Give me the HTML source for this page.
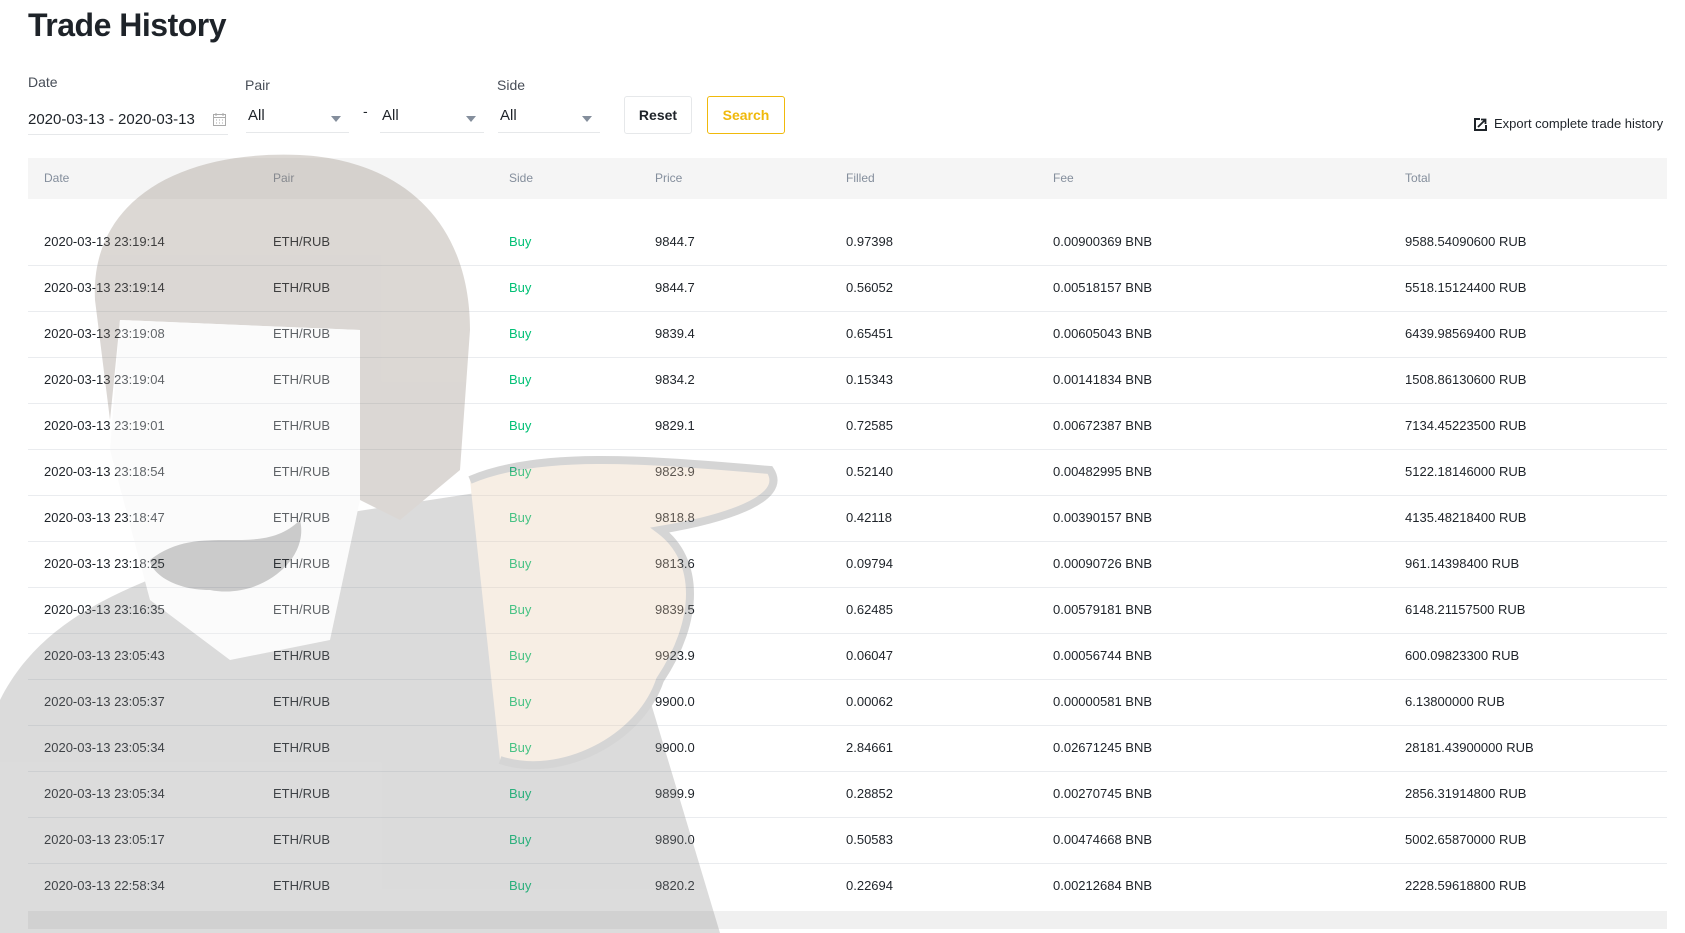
<!DOCTYPE html>
<html><head><meta charset="utf-8"><style>
*{margin:0;padding:0;box-sizing:border-box}
body{width:1685px;height:933px;overflow:hidden;background:#fff;font-family:"Liberation Sans",sans-serif;color:#1e2329;position:relative}
.abs{position:absolute;white-space:nowrap}
h1{position:absolute;left:28px;top:7px;font-size:32px;font-weight:bold;letter-spacing:-0.5px}
.lbl{font-size:14px;color:#474d57}
.inp{position:absolute;border-bottom:1px solid #e6e8ea;height:34px;font-size:15px}
.inp span{position:absolute;left:2px;top:8px}
.tri{position:absolute;right:8px;top:17px;width:0;height:0;border-left:5px solid transparent;border-right:5px solid transparent;border-top:6px solid #848e9c}
.btn{position:absolute;border:1px solid #e6e8ea;border-radius:3px;font-size:14px;font-weight:bold;text-align:center;line-height:36px;height:38px}
.hdr{position:absolute;left:28px;top:158px;width:1639px;height:41px;background:#f5f5f5}
.th{position:absolute;top:171px;font-size:12px;color:#848e9c}
.row{position:absolute;left:28px;width:1639px;height:46px;border-bottom:1px solid #eaecef;font-size:13px}
.row div{position:absolute;top:14px}
.row div:nth-child(3){left:481px;color:#02c076}
.row div:nth-child(4){left:627px}
.row div:nth-child(5){left:818px}
.row div:nth-child(6){left:1025px}
.row div:nth-child(7){left:1377px}
</style></head><body>
<h1>Trade History</h1>
<div class="abs lbl" style="left:28px;top:74px">Date</div>
<div class="abs lbl" style="left:245px;top:77px">Pair</div>
<div class="abs lbl" style="left:497px;top:77px">Side</div>
<div class="inp" style="left:28px;top:101px;width:200px"><span style="top:10px;left:0">2020-03-13 - 2020-03-13</span>
<svg style="position:absolute;right:2px;top:12px" width="13" height="13" viewBox="0 0 13 13"><rect x="0.5" y="1.5" width="12" height="11" fill="none" stroke="#aaa"/><path d="M0 4.5h13M3 0v3M10 0v3M3 7h1M6 7h1M9 7h1M3 10h1M6 10h1M9 10h1" stroke="#aaa"/></svg></div>
<div class="inp" style="left:246px;top:99px;width:103px"><span>All</span><i class="tri"></i></div>
<div class="abs" style="left:363px;top:103px;font-size:14px">-</div>
<div class="inp" style="left:380px;top:99px;width:104px"><span>All</span><i class="tri"></i></div>
<div class="inp" style="left:498px;top:99px;width:102px"><span>All</span><i class="tri"></i></div>
<div class="btn" style="left:624px;top:96px;width:68px">Reset</div>
<div class="btn" style="left:707px;top:96px;width:78px;border-color:#f0b90b;color:#f0b90b">Search</div>
<svg class="abs" style="left:1474px;top:118px" width="13" height="13" viewBox="0 0 13 13"><rect x="0" y="0" width="13" height="13" fill="#1e2329"/><rect x="2" y="2" width="9" height="9" fill="#fff"/><rect x="6" y="0" width="7" height="7" fill="#fff"/><path d="M4 9L11 2M7 1.5h4.5V6" stroke="#1e2329" stroke-width="1.8" fill="none"/></svg>
<div class="abs" style="left:1494px;top:116px;font-size:13px">Export complete trade history</div>
<div class="hdr"></div>
<div class="th" style="left:44px">Date</div>
<div class="th" style="left:273px">Pair</div>
<div class="th" style="left:509px">Side</div>
<div class="th" style="left:655px">Price</div>
<div class="th" style="left:846px">Filled</div>
<div class="th" style="left:1053px">Fee</div>
<div class="th" style="left:1405px">Total</div>
<div class="row" style="top:220px"><div style="left:16px">2020-03-13 23:19:14</div><div style="left:245px">ETH/RUB</div><div>Buy</div><div>9844.7</div><div>0.97398</div><div>0.00900369 BNB</div><div>9588.54090600 RUB</div></div>
<div class="row" style="top:266px"><div style="left:16px">2020-03-13 23:19:14</div><div style="left:245px">ETH/RUB</div><div>Buy</div><div>9844.7</div><div>0.56052</div><div>0.00518157 BNB</div><div>5518.15124400 RUB</div></div>
<div class="row" style="top:312px"><div style="left:16px">2020-03-13 23:19:08</div><div style="left:245px">ETH/RUB</div><div>Buy</div><div>9839.4</div><div>0.65451</div><div>0.00605043 BNB</div><div>6439.98569400 RUB</div></div>
<div class="row" style="top:358px"><div style="left:16px">2020-03-13 23:19:04</div><div style="left:245px">ETH/RUB</div><div>Buy</div><div>9834.2</div><div>0.15343</div><div>0.00141834 BNB</div><div>1508.86130600 RUB</div></div>
<div class="row" style="top:404px"><div style="left:16px">2020-03-13 23:19:01</div><div style="left:245px">ETH/RUB</div><div>Buy</div><div>9829.1</div><div>0.72585</div><div>0.00672387 BNB</div><div>7134.45223500 RUB</div></div>
<div class="row" style="top:450px"><div style="left:16px">2020-03-13 23:18:54</div><div style="left:245px">ETH/RUB</div><div>Buy</div><div>9823.9</div><div>0.52140</div><div>0.00482995 BNB</div><div>5122.18146000 RUB</div></div>
<div class="row" style="top:496px"><div style="left:16px">2020-03-13 23:18:47</div><div style="left:245px">ETH/RUB</div><div>Buy</div><div>9818.8</div><div>0.42118</div><div>0.00390157 BNB</div><div>4135.48218400 RUB</div></div>
<div class="row" style="top:542px"><div style="left:16px">2020-03-13 23:18:25</div><div style="left:245px">ETH/RUB</div><div>Buy</div><div>9813.6</div><div>0.09794</div><div>0.00090726 BNB</div><div>961.14398400 RUB</div></div>
<div class="row" style="top:588px"><div style="left:16px">2020-03-13 23:16:35</div><div style="left:245px">ETH/RUB</div><div>Buy</div><div>9839.5</div><div>0.62485</div><div>0.00579181 BNB</div><div>6148.21157500 RUB</div></div>
<div class="row" style="top:634px"><div style="left:16px">2020-03-13 23:05:43</div><div style="left:245px">ETH/RUB</div><div>Buy</div><div>9923.9</div><div>0.06047</div><div>0.00056744 BNB</div><div>600.09823300 RUB</div></div>
<div class="row" style="top:680px"><div style="left:16px">2020-03-13 23:05:37</div><div style="left:245px">ETH/RUB</div><div>Buy</div><div>9900.0</div><div>0.00062</div><div>0.00000581 BNB</div><div>6.13800000 RUB</div></div>
<div class="row" style="top:726px"><div style="left:16px">2020-03-13 23:05:34</div><div style="left:245px">ETH/RUB</div><div>Buy</div><div>9900.0</div><div>2.84661</div><div>0.02671245 BNB</div><div>28181.43900000 RUB</div></div>
<div class="row" style="top:772px"><div style="left:16px">2020-03-13 23:05:34</div><div style="left:245px">ETH/RUB</div><div>Buy</div><div>9899.9</div><div>0.28852</div><div>0.00270745 BNB</div><div>2856.31914800 RUB</div></div>
<div class="row" style="top:818px"><div style="left:16px">2020-03-13 23:05:17</div><div style="left:245px">ETH/RUB</div><div>Buy</div><div>9890.0</div><div>0.50583</div><div>0.00474668 BNB</div><div>5002.65870000 RUB</div></div>
<div class="row" style="top:864px;border-bottom:none"><div style="left:16px">2020-03-13 22:58:34</div><div style="left:245px">ETH/RUB</div><div>Buy</div><div>9820.2</div><div>0.22694</div><div>0.00212684 BNB</div><div>2228.59618800 RUB</div></div>
<div class="abs" style="left:28px;top:911px;width:1639px;height:18px;background:#f0f0f0"></div>
<svg class="abs" style="left:0;top:0;pointer-events:none" width="1685" height="933" viewBox="0 0 1685 933">
<g opacity="0.3">
<path d="M0 933V700C40 620 120 590 200 560L300 520 430 500 560 480 650 700 720 933Z" fill="#8a8a8a"/>
<path d="M95 300C90 200 180 150 300 155 400 160 470 220 470 330L460 470 400 520 360 500 360 330 120 320 110 420Z" fill="#8a7d72"/>
<path d="M120 320L360 330 360 500 330 640 230 660 150 600 110 450Z" fill="#f2f2f2"/>
<path d="M150 560C200 520 260 560 300 520 310 560 260 600 210 590 170 590 150 570 150 560Z" fill="#555"/>
<path d="M470 480C540 450 650 460 770 470 790 500 720 520 660 530 700 560 700 620 660 680 640 740 560 780 500 760 470 700 460 600Z" fill="#e8c9a8"/>
<path d="M470 480C540 450 650 460 770 470 790 500 720 520 660 530 700 560 700 620 660 680 640 740 560 780 500 760 470 700 460 600Z" fill="none" stroke="#777" stroke-width="8"/>
</g>
</svg>
</body></html>
